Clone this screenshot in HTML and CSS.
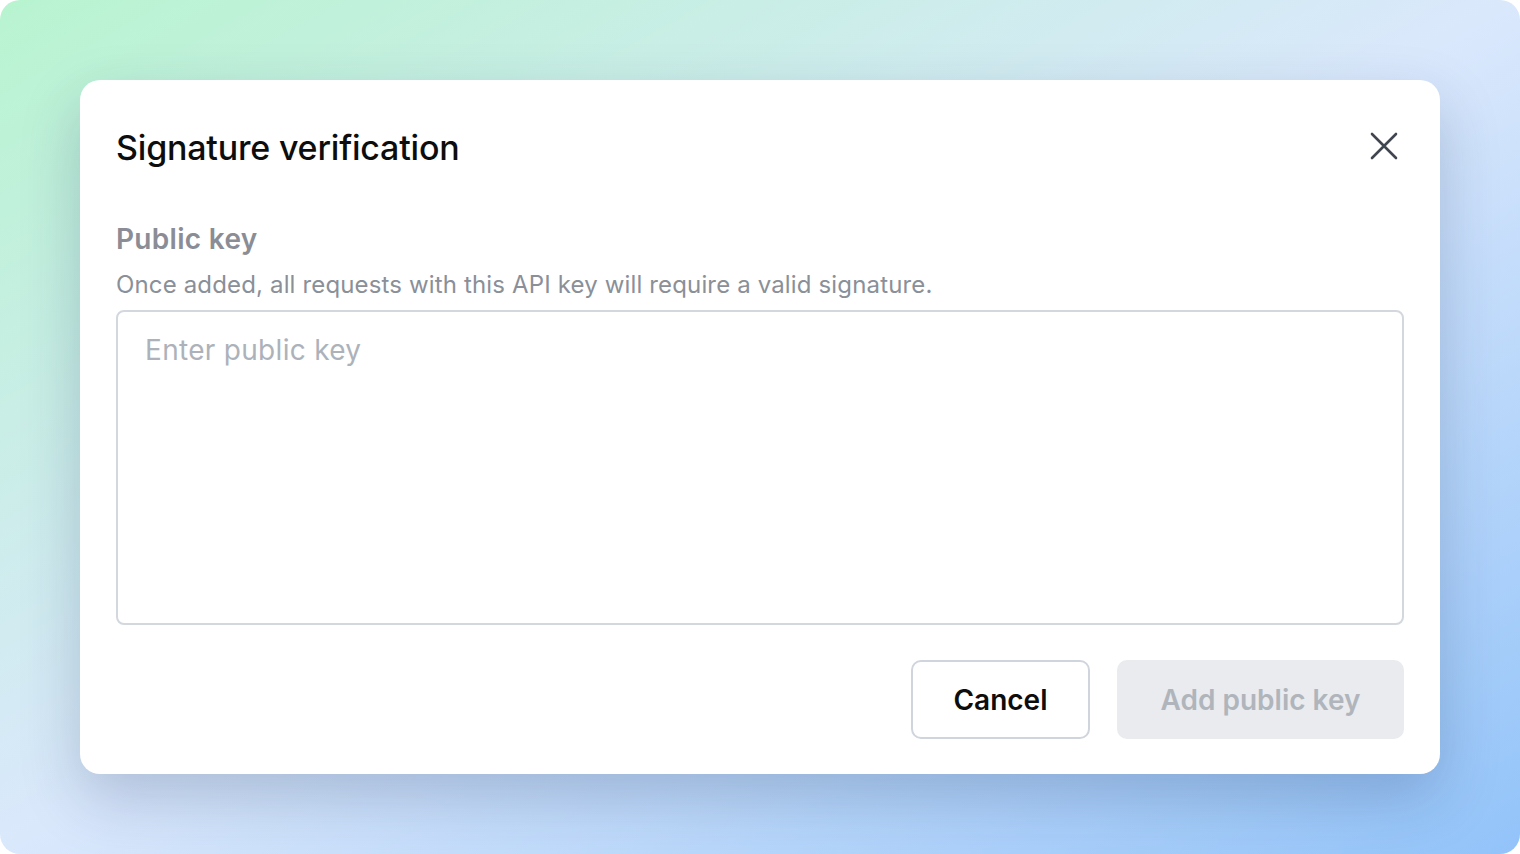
FILE: index.html
```html
<!DOCTYPE html>
<html lang="en">
<head>
<meta charset="utf-8">
<title>Signature verification</title>
<link rel="stylesheet" href="styles.css">
</head>
<body>
<div class="frame">
  <div class="modal">
    <div class="header">
      <h1 class="title">Signature verification</h1>
      <button class="close" aria-label="Close">
        <svg width="30" height="30" viewBox="0 0 30 30" fill="none" stroke="#3f4650" stroke-width="2.6" stroke-linecap="round">
          <path d="M3 3 L27 27 M27 3 L3 27"/>
        </svg>
      </button>
    </div>
    <div class="field">
      <div class="label">Public key</div>
      <div class="desc">Once added, all requests with this API key will require a valid signature.</div>
      <textarea class="input" placeholder="Enter public key"></textarea>
    </div>
    <div class="actions">
      <button class="btn btn-cancel">Cancel</button>
      <button class="btn btn-add" disabled>Add public key</button>
    </div>
  </div>
</div>
</body>
</html>
```

FILE: styles.css
```css
html, body {
  margin: 0;
  padding: 0;
  background: #ffffff;
}
body {
  font-family: Inter, "Liberation Sans", sans-serif;
}
.frame {
  width: 1520px;
  height: 854px;
  box-sizing: border-box;
  padding: 80px;
  border-radius: 20px;
  overflow: hidden;
  background: linear-gradient(to bottom right, #b8f4d0 0%, #dae8fc 50%, #92c3f9 100%);
}
.modal {
  width: 1360px;
  height: 694px;
  box-sizing: border-box;
  padding: 48px 36px 36px;
  background: #ffffff;
  border-radius: 20px;
  box-shadow: 0 24px 60px rgba(20, 40, 90, 0.22);
  display: flex;
  flex-direction: column;
}
.header {
  display: flex;
  align-items: center;
  justify-content: space-between;
  height: 40px;
}
.title {
  margin: 0;
  font-size: 34px;
  line-height: 40px;
  font-weight: 500;
  color: #0d0d0d;
  letter-spacing: -0.2px;
}
.close {
  border: 0;
  background: none;
  padding: 0;
  width: 30px;
  height: 30px;
  margin-right: 5px;
  margin-bottom: 4px;
  display: flex;
}
.field {
  margin-top: 53px;
  display: flex;
  flex-direction: column;
}
.label {
  font-size: 28px;
  line-height: 36px;
  font-weight: 600;
  color: #8b8d96;
  letter-spacing: 0.3px;
}
.desc {
  margin-top: 12px;
  font-size: 24px;
  line-height: 32px;
  color: #8a8f98;
  letter-spacing: 0.15px;
}
.input {
  margin-top: 9px;
  height: 315px;
  box-sizing: border-box;
  border: 2px solid #d3d7de;
  border-radius: 8px;
  padding: 20px 27px;
  font-family: inherit;
  font-size: 28px;
  line-height: 36px;
  letter-spacing: 0.3px;
  resize: none;
  outline: none;
  color: #333;
}
.input::placeholder {
  color: #adb2ba;
}
.actions {
  margin-top: 35px;
  display: flex;
  justify-content: flex-end;
  gap: 27px;
}
.btn {
  height: 79px;
  box-sizing: border-box;
  border-radius: 10px;
  font-family: inherit;
  font-size: 28px;
  font-weight: 600;
}
.btn-cancel {
  width: 179px;
  background: #ffffff;
  border: 2px solid #d0d5dd;
  color: #0d0d0d;
}
.btn-add {
  width: 287px;
  background: #e9ebef;
  border: 0;
  color: #b0b5bc;
}
```
